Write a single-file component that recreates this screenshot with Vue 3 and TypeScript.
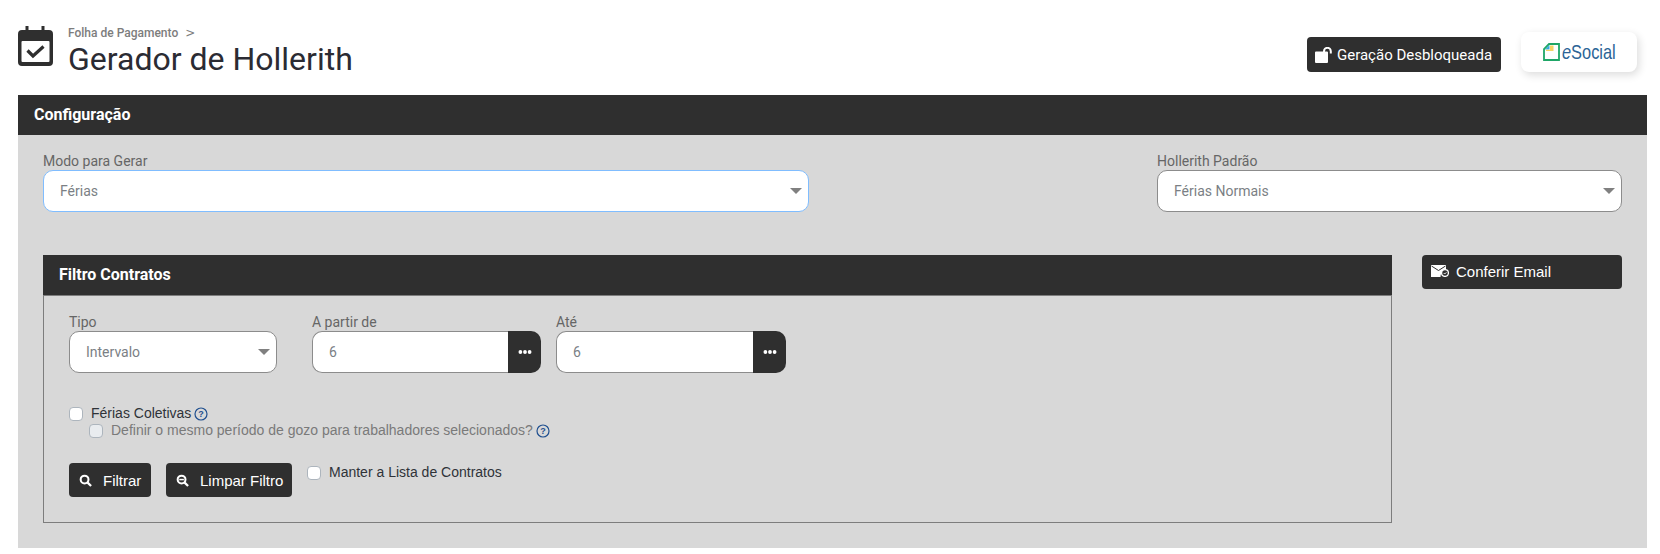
<script setup lang="ts">
const dots = 'M1.500 8a1.900 1.900 0 1 0 3.800 0 1.900 1.900 0 0 0-3.800 0zm4.600 0a1.900 1.900 0 1 0 3.800 0 1.900 1.900 0 0 0-3.800 0zm4.600 0a1.900 1.900 0 1 0 3.800 0 1.900 1.900 0 0 0-3.800 0z'
</script>

<template>
  <div class="page">
    <header class="top">
      <svg class="cal" viewBox="0 0 35 40" width="35" height="40">
        <path fill="#2f2f2f" d="M7.500 0h3v4h13V0h3v4H31a4 4 0 0 1 4 4v28a4 4 0 0 1-4 4H4a4 4 0 0 1-4-4V8a4 4 0 0 1 4-4h3.500z" />
        <rect x="3.500" y="15" width="28" height="21" rx="1" fill="#fff" />
        <path d="M9.500 24.500l5.500 5.500 10.500-9.500" fill="none" stroke="#2f2f2f" stroke-width="3.200" />
      </svg>
      <div class="heading">
        <div class="crumb">Folha de Pagamento <span class="chev">&gt;</span></div>
        <h1>Gerador de Hollerith</h1>
      </div>
      <button class="lock-btn">
        <svg viewBox="0 0 18 16" width="18" height="16">
          <path fill="#fff" d="M1 4.500h11a1 1 0 0 1 1 1V15a1 1 0 0 1-1 1H1a1 1 0 0 1-1-1V5.500a1 1 0 0 1 1-1z" />
          <path fill="none" stroke="#fff" stroke-width="2" d="M9 5V4.200a3.400 3.400 0 0 1 6.800 0V6.500" />
        </svg>
        Geração Desbloqueada
      </button>
      <div class="esocial">
        <svg viewBox="0 0 17 18" width="17" height="18">
          <path d="M6 1h10v16H1V6z" fill="#fff" stroke="#1fa667" stroke-width="1.800" />
          <path d="M6.500 2L2 6.500h4.500z" fill="#36a9e0" />
          <path d="M7 2.500h3.500v5.500H3v-1.200h4z" fill="#f6d365" />
        </svg>
        <span class="es"><i>e</i>Social</span>
      </div>
    </header>

    <section class="config">
      <h2 class="bar">Configuração</h2>
      <div class="config-body">
        <div class="selects">
          <label class="field mode">
            <span class="lbl">Modo para Gerar</span>
            <div class="ctl focus"><span>Férias</span><i class="caret"></i></div>
          </label>
          <label class="field std">
            <span class="lbl">Hollerith Padrão</span>
            <div class="ctl"><span>Férias Normais</span><i class="caret"></i></div>
          </label>
        </div>

        <div class="lower">
          <section class="filter">
            <h3 class="bar sub">Filtro Contratos</h3>
            <div class="filter-body">
              <div class="filter-row">
                <label class="field tipo">
                  <span class="lbl">Tipo</span>
                  <div class="ctl"><span>Intervalo</span><i class="caret"></i></div>
                </label>
                <label class="field range">
                  <span class="lbl">A partir de</span>
                  <div class="group">
                    <div class="ctl left"><span>6</span></div>
                    <button class="more"><svg viewBox="0 0 16 16" width="16" height="16"><path fill="#fff" :d="dots" /></svg></button>
                  </div>
                </label>
                <label class="field range">
                  <span class="lbl">Até</span>
                  <div class="group">
                    <div class="ctl left"><span>6</span></div>
                    <button class="more"><svg viewBox="0 0 16 16" width="16" height="16"><path fill="#fff" :d="dots" /></svg></button>
                  </div>
                </label>
              </div>

              <div class="check one">
                <i class="box"></i>
                <span>Férias Coletivas</span>
                <svg class="help" viewBox="0 0 14 14" width="14" height="14">
                  <circle cx="7" cy="7" r="6" fill="none" stroke="#1f4f8f" stroke-width="1.200" />
                  <text x="7" y="10.200" text-anchor="middle" font-size="9" font-weight="700" font-family="Liberation Sans" fill="#1f4f8f">?</text>
                </svg>
              </div>
              <div class="check two">
                <i class="box off"></i>
                <span>Definir o mesmo período de gozo para trabalhadores selecionados?</span>
                <svg class="help" viewBox="0 0 14 14" width="14" height="14">
                  <circle cx="7" cy="7" r="6" fill="none" stroke="#1f4f8f" stroke-width="1.200" />
                  <text x="7" y="10.200" text-anchor="middle" font-size="9" font-weight="700" font-family="Liberation Sans" fill="#1f4f8f">?</text>
                </svg>
              </div>

              <div class="actions">
                <button class="act filtrar">
                  <svg viewBox="0 0 14 14" width="13" height="13"><circle cx="6" cy="6" r="4.200" fill="none" stroke="#fff" stroke-width="2.200" /><path d="M9 9l4 4" stroke="#fff" stroke-width="2.400" /></svg>
                  Filtrar
                </button>
                <button class="act limpar">
                  <svg viewBox="0 0 14 14" width="13" height="13"><circle cx="6" cy="6" r="4.200" fill="none" stroke="#fff" stroke-width="2.200" /><path d="M9 9l4 4" stroke="#fff" stroke-width="2.400" /><path d="M3.500 6h5" stroke="#fff" stroke-width="1.600" /></svg>
                  Limpar Filtro
                </button>
                <div class="check keep">
                  <i class="box"></i>
                  <span>Manter a Lista de Contratos</span>
                </div>
              </div>
            </div>
          </section>

          <button class="mail">
            <svg viewBox="0 0 18 12" width="18" height="12">
              <path fill="#fff" d="M0 0h15v6.500A5 5 0 0 0 9.500 12H0z" />
              <path d="M0.500 1l7 4.500 7-4.500" fill="none" stroke="#2f2f2f" stroke-width="1" />
              <circle cx="14" cy="8" r="3.400" fill="#2f2f2f" stroke="#fff" stroke-width="1.300" />
              <path d="M12.700 8l1 1 1.700-1.700" fill="none" stroke="#fff" stroke-width="0.900" />
            </svg>
            Conferir Email
          </button>
        </div>
      </div>
    </section>
  </div>
</template>

<style>
html, body { margin: 0; background: #fff; }
</style>

<style scoped>
.page {
  width: 1660px;
  height: 554px;
  box-sizing: border-box;
  padding: 0 13px 6px 18px;
  font-family: Roboto, "Liberation Sans", sans-serif;
  overflow: hidden;
}
.top {
  height: 95px;
  box-sizing: border-box;
  display: flex;
  align-items: flex-start;
}
.cal { margin-top: 26px; flex: none; }
.heading { margin-left: 15px; margin-top: 25px; flex: 1; }
.crumb { font-size: 12px; line-height: 16px; color: #7d7d7d; font-weight: 500; }
.chev { margin-left: 4px; font-family: "DejaVu Sans", sans-serif; }
h1 { margin: 0; font-size: 32px; line-height: 36px; font-weight: 400; color: #2b2b33; }
button { border: 0; font: inherit; color: #fff; background: #2f2f2f; padding: 0; }
.lock-btn {
  width: 194px;
  height: 35px;
  margin-top: 37px;
  border-radius: 4px;
  display: flex;
  align-items: center;
  gap: 4px;
  padding-left: 8px;
  box-sizing: border-box;
  font-size: 15px;
  font-weight: 400;
  white-space: nowrap;
}
.esocial {
  width: 116px;
  height: 40px;
  margin: 32px 10px 0 20px;
  border-radius: 8px;
  background: #fff;
  box-shadow: 2px 3px 8px rgba(0, 0, 0, 0.14);
  display: flex;
  align-items: center;
  gap: 2px;
  box-sizing: border-box;
  padding: 0 0 1px 22px;
}
.es { font-family: "Liberation Sans", sans-serif; font-size: 21px; color: #2b6496; transform: scaleX(0.78); transform-origin: left; width: 60px; white-space: nowrap; }
.es i { font-style: italic; }
.config { background: #d8d8d8; height: 453px; }
.bar {
  margin: 0;
  background: #2f2f2f;
  color: #fff;
  height: 40px;
  line-height: 39px;
  padding-left: 16px;
  font-size: 16px;
  font-weight: 700;
  box-sizing: border-box;
}
.config-body { padding: 17px 25px 0; }
.selects { display: flex; justify-content: space-between; }
.field { display: block; }
.lbl { display: block; font-size: 14px; line-height: 18px; color: #666; }
.mode { width: 766px; }
.std { width: 465px; }
.ctl {
  height: 42px;
  box-sizing: border-box;
  background: #fff;
  border: 1px solid #8c8c8c;
  border-radius: 10px;
  display: flex;
  align-items: center;
  justify-content: space-between;
  padding: 0 6px 0 16px;
  font-size: 14px;
  color: #7b7f85;
}
.focus { border-color: #80bdff; }
.caret { border: 6px solid transparent; border-top: 6px solid #808080; border-bottom: 0; width: 0; height: 0; }
.lower { display: flex; justify-content: space-between; margin-top: 43px; }
.filter { width: 1349px; height: 268px; box-sizing: border-box; }
.filter-body {
  height: 228px;
  box-sizing: border-box;
  border: 1px solid #7d7d7d;
  padding: 17px 25px 0;
}
.filter-row { display: flex; }
.tipo { width: 208px; }
.range { width: 229px; margin-left: 35px; }
.range + .range { width: 230px; margin-left: 15px; }
.group { display: flex; }
.left { flex: 1; border-right: 0; border-radius: 10px 0 0 10px; }
.more { width: 33px; height: 42px; border-radius: 0 10px 10px 0; display: flex; align-items: center; justify-content: center; }
.check { display: flex; align-items: center; font-family: "Liberation Sans", sans-serif; font-size: 14px; line-height: 17px; color: #2f3338; }
.box {
  width: 14px; height: 14px; box-sizing: border-box; flex: none;
  background: #fff; border: 1px solid #adb5bd; border-radius: 4px; margin-right: 8px;
}
.box.off { background: #e9ecef; }
.one { margin-top: 32px; }
.two { margin: 0 0 0 20px; color: #7a7a7a; }
.help { margin-left: 3px; }
.actions { display: flex; align-items: flex-start; margin-top: 24px; }
.act {
  height: 34px; border-radius: 4px; font-family: "Liberation Sans", sans-serif; font-size: 15px;
  display: flex; align-items: center; box-sizing: border-box; padding-left: 10px; gap: 11px;
  white-space: nowrap;
}
.filtrar { width: 82px; }
.limpar { width: 126px; margin-left: 15px; }
.keep { margin: 1px 0 0 15px; }
.mail {
  width: 200px; height: 34px; border-radius: 4px;
  display: flex; align-items: center; gap: 7px; padding: 0 0 2px 9px; box-sizing: border-box;
  font-family: "Liberation Sans", sans-serif; font-size: 15px;
}
</style>
